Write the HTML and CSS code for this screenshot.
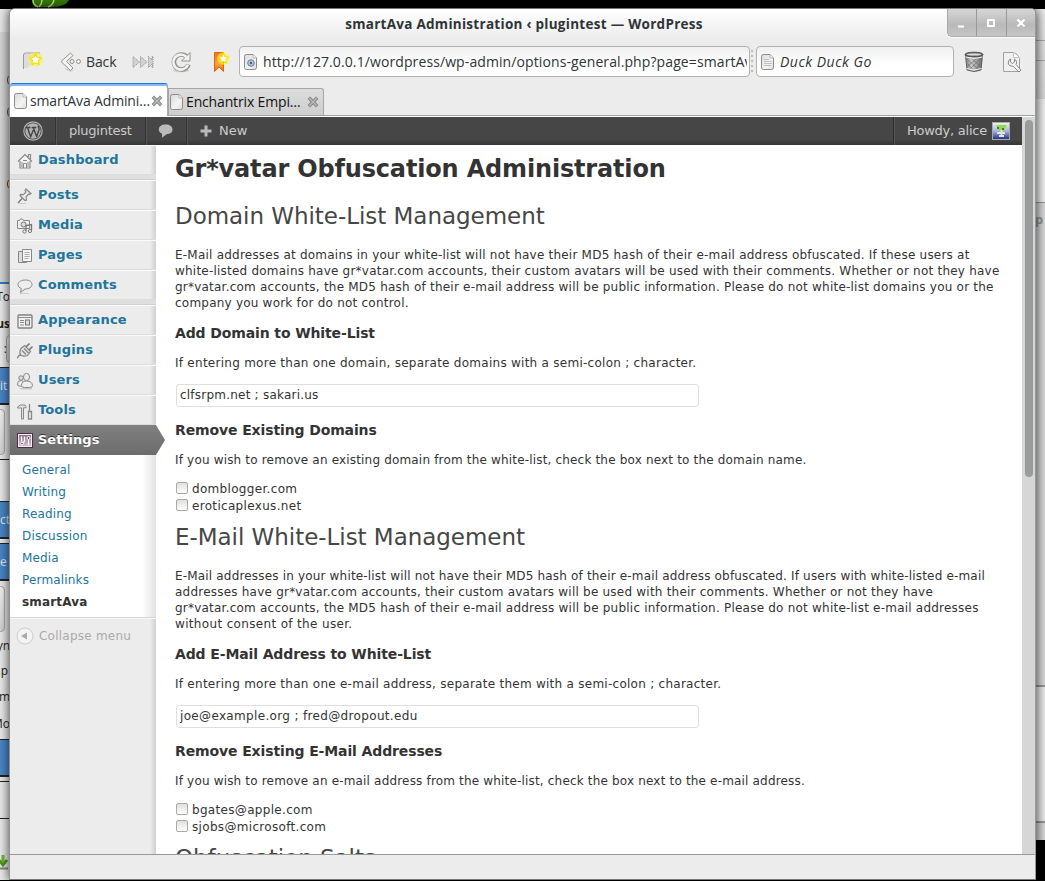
FILE: index.html
```
<!DOCTYPE html>
<html lang="en">
<head>
<meta charset="utf-8">
<title>smartAva Administration</title>
<link rel="stylesheet" href="styles.css">
</head>
<body>
<svg width="0" height="0" class="defs">
  <defs>
    <linearGradient id="paper" x1="0" y1="0" x2="1" y2="1"><stop offset="0" stop-color="#d9dbd7"/><stop offset=".6" stop-color="#f4f4f3"/><stop offset="1" stop-color="#dcdcda"/></linearGradient>
    <linearGradient id="orange" x1="0" y1="0" x2="0" y2="1"><stop offset="0" stop-color="#e87a12"/><stop offset=".6" stop-color="#fda33a"/><stop offset="1" stop-color="#e36c0a"/></linearGradient>
    <linearGradient id="can" x1="0" y1="0" x2="1" y2="0"><stop offset="0" stop-color="#777"/><stop offset=".35" stop-color="#ccc"/><stop offset=".7" stop-color="#999"/><stop offset="1" stop-color="#666"/></linearGradient>
    <linearGradient id="plum" x1="0" y1="0" x2="0" y2="1"><stop offset="0" stop-color="#8a6286"/><stop offset="1" stop-color="#dccbdb"/></linearGradient>
    <linearGradient id="ava" x1="0" y1="0" x2="0" y2="1"><stop offset="0" stop-color="#f2f4ff"/><stop offset=".5" stop-color="#aab2dd"/><stop offset="1" stop-color="#1c2a86"/></linearGradient>
    <symbol id="doc" viewBox="0 0 14 16"><path d="M2.500.5H9L12.500 4V13.500a2 2 0 0 1-2 2h-8a2 2 0 0 1-2-2v-11a2 2 0 0 1 2-2z" fill="url(#paper)" stroke="#8a8c88"/><path d="M9 .8V4h3.300" fill="#fff" stroke="#a5a6a3" stroke-width=".8"/></symbol>
    <symbol id="close" viewBox="0 0 12 12"><path d="M1.800 1.800l8.400 8.400M10.200 1.800l-8.400 8.400" stroke="#868686" stroke-width="3.400"/><path d="M2.300 2.300l7.400 7.400M9.700 2.300l-7.400 7.400" stroke="#bababa" stroke-width="1.400"/></symbol>
    <symbol id="star" viewBox="0 0 14 14"><circle cx="7" cy="7" r="6.800" fill="#fff04a" opacity=".6"/><path d="M7 1.800l1.700 3 3.500.7-2.400 2.700.4 3.500L7 10.200l-3.200 1.500.4-3.500-2.400-2.700 3.500-.7z" fill="#fff" stroke="#f2e200" stroke-width="1.200"/></symbol>
  </defs>
</svg>

<div class="desktop">
  <svg class="leaf" width="40" height="8" viewBox="0 0 40 8"><path d="M0 0H37Q34 7 20 7H3Q0 4 0 0z" fill="#347c08"/><path d="M1 0q0 5 5 7M10 0q0 4-3 7M22 0q-1 5-6 7" stroke="#bce97a" fill="none" stroke-width="1.400"/></svg>
  <div class="behind-left">
    <i class="bl-head"></i>
    <i class="bl-dot bl-gray"></i><i class="bl-dot bl-blue"></i><i class="bl-dot bl-red"></i>
    <i class="bl-field"></i>
    <span class="bl-text t1">To</span>
    <span class="bl-text t2"><b>us</b></span>
    <span class="bl-text t3">:&nbsp;</span>
    <i class="bl-button k0"></i>
    <span class="bl-tile b1">it</span>
    <i class="bl-button k1"></i>
    <i class="bl-rule r1"></i>
    <span class="bl-tile b2">ct</span>
    <span class="bl-tile b3">e</span>
    <i class="bl-button k2"></i>
    <span class="bl-text t4">yn</span>
    <span class="bl-text t5">.p</span>
    <span class="bl-text t6">m</span>
    <span class="bl-text t7">Mo</span>
    <span class="bl-tile b4"></span>
    <i class="bl-rule r2"></i><i class="bl-rule r3"></i>
    <svg class="bl-arrow" width="10" height="16" viewBox="0 0 10 16"><path d="M0 14.500h8" stroke="#888" stroke-width="2"/><path d="M3 1v9M-1 6l4 5 4-5" fill="none" stroke="#4a9a12" stroke-width="2.800"/><path d="M3 1v8" stroke="#8fe04a"/></svg>
  </div>
  <div class="behind-right">
    <i class="br-one"></i><i class="br-two"></i><i class="br-three"></i><span class="br-text">p</span><i class="br-four"></i><i class="br-five"></i>
  </div>

  <div class="window">
    <header class="titlebar">
      <div class="title">smartAva Administration ‹ plugintest — WordPress</div>
      <div class="controls">
        <span><svg width="10" height="10"><path d="M1 8.500h6" stroke="#fff" stroke-width="2"/></svg></span>
        <span><svg width="10" height="10"><rect x="2" y="2" width="6" height="6" fill="none" stroke="#fff" stroke-width="2"/></svg></span>
        <span><svg width="10" height="10"><path d="M1.500 1.500l7 7M8.500 1.500l-7 7" stroke="#fff" stroke-width="2.200"/></svg></span>
      </div>
    </header>

    <div class="toolbar">
      <svg class="i-newtab" width="24" height="24" viewBox="0 0 24 24"><path d="M2 4h11v8l-8 6H2z" fill="#dcddd9"/><path d="M1.500 19V5a2 2 0 0 1 2-2H18" fill="none" stroke="#9b9b9b"/><use href="#star" x="6" y="2" width="15" height="15"/></svg>
      <svg class="i-back" width="22" height="20" viewBox="0 0 22 20"><path d="M10.500 1L1 9.500l9.500 9 2.500-2.500L6.500 9.500 13 3.500z" fill="#f4f4f3" stroke="#90928e"/><path d="M5 16.500l6 3 2-2" fill="none" stroke="#c2c2c0"/><circle cx="12" cy="9.500" r="2" fill="#eee" stroke="#90928e"/><circle cx="18.500" cy="9.500" r="2" fill="#eee" stroke="#90928e"/></svg>
      <span class="back-label">Back</span>
      <svg class="i-fast" width="22" height="14" viewBox="0 0 22 14"><path d="M1 1.500L7.500 7 1 12.500zM8.500 1.500L15 7l-6.500 5.500zM16.500 1.500L20 5V1.500h1v11h-1V9l-3.500 3.500z" fill="#d2d2d2" stroke="#888" stroke-dasharray="1 1"/></svg>
      <svg class="i-reload" width="22" height="22" viewBox="0 0 22 22"><ellipse cx="11" cy="19.500" rx="8" ry="1.700" fill="#cfcfcd"/><path d="M18.500 13.500a7.500 7.500 0 1 1-1.500-7.500" fill="none" stroke="#91918f" stroke-width="4.600"/><path d="M20 1.500v8.500h-8.500z" fill="#f3f3f2" stroke="#91918f"/><path d="M17.900 13.700a7.500 7.500 0 1 1-1.500-7.700" fill="none" stroke="#f3f3f2" stroke-width="2.600"/></svg>
      <svg class="i-book" width="18" height="24" viewBox="0 0 18 24"><path d="M1.500 2.500h9v19L6 17l-4.500 4.500z" fill="url(#orange)" stroke="#dd6508"/><use href="#star" x="4" y="2" width="13" height="13"/></svg>
      <div class="entry address">
        <svg width="14" height="16" viewBox="0 0 14 16"><use href="#doc"/><circle cx="7" cy="9" r="3.300" fill="#b8c8dc" stroke="#667b9c"/><circle cx="7" cy="9" r="1.200" fill="#415e8d"/></svg>
        <span>http://127.0.0.1/wordpress/wp-admin/options-general.php?page=smartAva</span>
      </div>
      <i class="grip"></i>
      <div class="entry search">
        <svg width="14" height="16" viewBox="0 0 14 16"><use href="#doc"/><path d="M3 5.500h5M3 7.500h8M3 9.500h8M3 11.500h7" stroke="#b4b4b2" stroke-width=".8"/></svg>
        <span>Duck Duck Go</span>
      </div>
      <svg class="i-trash" width="22" height="22" viewBox="0 0 22 22"><path d="M2.500 4L4 19q7 3 14 0l1.500-15z" fill="url(#can)" stroke="#5d5d5d"/><path d="M4 8l12 11M8 7l9 8M5 13l5 6M17 8L6 19M14 7l-9 8M17 13l-5 6" stroke="#666" stroke-width=".6"/><ellipse cx="11" cy="3.500" rx="9" ry="2.300" fill="#777" stroke="#4a4a4a"/><ellipse cx="11" cy="3.500" rx="7" ry="1.100" fill="#ddd"/><path d="M2.500 6q8.500 3 17 0M3.500 17.500q7.500 3 15 0" fill="none" stroke="#f2f2f2"/></svg>
      <svg class="i-wrench" width="22" height="22" viewBox="0 0 22 22"><path d="M2.500 1.500h10q4 1 6 6v13h-16z" fill="#f0f0f0" stroke="#a0a09e"/><path d="M12.500 1.500v5h5" fill="#fff" stroke="#c4c4c4"/><path d="M8.500 14.500a4 4 0 0 1 1-6.500v3l2 1.500 2-1.500V8a4 4 0 0 1 1.500 5.500l5 5.500-2 2-5.500-5.500z" fill="#f4f4f4" stroke="#888"/></svg>
    </div>

    <nav class="tabs">
      <div class="tab active"><svg width="14" height="16"><use href="#doc"/></svg><span>smartAva Admini…</span><svg width="12" height="12"><use href="#close"/></svg></div>
      <div class="tab"><svg width="14" height="16"><use href="#doc"/></svg><span>Enchantrix Empi…</span><svg width="12" height="12"><use href="#close"/></svg></div>
    </nav>

    <div class="viewport">
      <div class="page">
        <div class="adminbar">
          <span class="ab-cell ab-logo"><svg width="20" height="20" viewBox="0 0 20 20"><circle cx="10" cy="10" r="9.200" fill="none" stroke="#b2b2b2" stroke-width="1.200"/><circle cx="10" cy="10" r="7.700" fill="#b2b2b2"/><path d="M3 6.500h4.500M4.500 6.500l3.300 10M8.700 6.500h4.600M10.300 6.500l3.500 9.500M7.600 16L10.300 9M13.700 15.500l2.500-7q0-2-1.400-3.500" fill="none" stroke="#444" stroke-width="1.400"/></svg></span>
          <span class="ab-cell ab-site">plugintest</span>
          <span class="ab-cell ab-comment"><svg width="16" height="14" viewBox="0 0 16 14"><path d="M7.500.5C12 .5 14.500 2.500 14.500 5.500S12 10 8.500 10.200L4 13.800V9.800C2 9 .8 7.500.8 5.500.8 2.500 3.500.5 7.500.5z" fill="#bbb"/></svg></span>
          <span class="ab-cell ab-new"><svg width="12" height="12"><path d="M6 .5v11M.5 6h11" stroke="#bbb" stroke-width="3"/></svg>New</span>
          <span class="ab-cell ab-user">Howdy, alice<svg width="18" height="18" viewBox="0 0 18 18"><rect x=".5" y=".5" width="17" height="17" fill="url(#ava)" stroke="#aaa"/><path d="M4 3h11l-3 6H7z" fill="#8edb4c"/><path d="M5 6h2M10 7h2" stroke="#444" stroke-width="1.300"/><path d="M9.500 8v6M5 11h8M7 14h5" stroke="#dfe8d6" stroke-width="1.800"/></svg></span>
        </div>

        <div class="columns">
          <aside class="menu">
            <a class="item"><svg width="18" height="18" viewBox="0 0 18 18"><path d="M2 9.500L9 2.500l7 7M4 9v7h10V9M12.500 5V2.500h2V7" fill="#f4f4f4" stroke="#888" stroke-width="1.200"/><path d="M7.500 16v-4.500h3V16M7 8.500h4M6 10v5M12 10v5" fill="none" stroke="#888"/></svg>Dashboard</a>
            <i class="sep"></i>
            <a class="item"><svg width="18" height="18" viewBox="0 0 18 18"><path d="M10 2l5 4.500-1.500 1-1-.5-2.500 3 .5 3-1.500.5L4 8.500l.5-1.200 3 .4L10 5l-1-1.500z" fill="#eee" stroke="#888" stroke-width="1.200"/><path d="M6 11.500L2 16" stroke="#777" stroke-width="1.300"/><path d="M3 16.500h7" stroke="#ccc"/></svg>Posts</a>
            <a class="item"><svg width="18" height="18" viewBox="0 0 18 18"><path d="M1.500 3.500h2l1-1.500h2l1 1.500h6v8h-12z" fill="#eee" stroke="#888"/><circle cx="7.500" cy="7.500" r="2.500" fill="#ddd" stroke="#777"/><path d="M10 14V8.500l5.500-1V13" fill="none" stroke="#777" stroke-width="1.300"/><circle cx="8.500" cy="14.500" r="1.600" fill="#eee" stroke="#777"/><circle cx="14" cy="14" r="1.600" fill="#eee" stroke="#777"/></svg>Media</a>
            <a class="item"><svg width="18" height="18" viewBox="0 0 18 18"><path d="M2.500 4.500h8v11h-8z" fill="#ddd" stroke="#888"/><path d="M6.500 2.500h9v12h-9z" fill="#f5f5f5" stroke="#888"/><path d="M8.500 5.500h5M8.500 7.500h5M8.500 9.500h5M8.500 11.500h4" stroke="#aaa"/></svg>Pages</a>
            <a class="item"><svg width="18" height="18" viewBox="0 0 18 18"><path d="M9.500 3c4 0 6.500 1.800 6.500 4.500S13 12 9 12l-4.500 3.500.8-4C3.300 10.800 2 9.500 2 7.500 2 4.800 5.500 3 9.500 3z" fill="#eee" stroke="#888"/><path d="M4 16.500h9" stroke="#ccc"/></svg>Comments</a>
            <i class="sep"></i>
            <a class="item"><svg width="18" height="18" viewBox="0 0 18 18"><rect x="2" y="3" width="14" height="13" rx="1" fill="#f2f2f2" stroke="#808080" stroke-width="1.300"/><path d="M2 5.500h14M4 8.500h4M4 10.500h4M4 13h4" stroke="#888"/><rect x="9.500" y="8" width="4" height="5" fill="#ddd" stroke="#777"/></svg>Appearance</a>
            <a class="item"><svg width="18" height="18" viewBox="0 0 18 18"><path d="M8.500 3.500l6 6-3 4q-4 1.500-7-.5-1.500-3 .5-6.500z" fill="#e4e4e4" stroke="#888" stroke-width="1.200"/><path d="M10 5l3.500-3.500M13 8l3.500-3.500" stroke="#777" stroke-width="1.700"/><path d="M5 13q-3 0-3.500 3.500M8 6.500l4.500 4.500M6 8.500l4 4" fill="none" stroke="#888" stroke-width="1.300"/></svg>Plugins</a>
            <a class="item"><svg width="18" height="18" viewBox="0 0 18 18"><circle cx="5" cy="6" r="2.200" fill="#ddd" stroke="#888"/><path d="M1.500 12q0-3.500 3.500-3.500 2 0 3 2v3.500H3q-1.500 0-1.500-2z" fill="#eee" stroke="#888"/><ellipse cx="10.500" cy="5" rx="3" ry="3.700" fill="#ececec" stroke="#888"/><path d="M5.500 13.500q0-4.500 5-4.500 5.500 0 6 4.500 0 2-3 2h-5q-3 0-3-2z" fill="#eee" stroke="#888"/><path d="M4 16.800h12" stroke="#bbb"/></svg>Users</a>
            <a class="item"><svg width="18" height="18" viewBox="0 0 18 18"><path d="M1.500 6q1-3 3-3H9l1 1.500v1.300H7.500V17h-2V6z" fill="#e2e2e2" stroke="#888"/><path d="M13.500 2v7M12.500 9.500h3V17h-3z" fill="#eee" stroke="#888" stroke-width="1.300"/></svg>Tools</a>
            <a class="item current"><svg width="18" height="18" viewBox="0 0 18 18"><rect x="1.500" y="1.500" width="15" height="14" fill="url(#plum)" stroke="#4c2d49"/><rect x="2.500" y="2.500" width="13" height="12" fill="none" stroke="#f3eaf2"/><path d="M5.500 4.500v5M8.500 4.500V9L7 11M12.500 8v5" fill="none" stroke="#fff" stroke-width="1.200"/><circle cx="6" cy="11.500" r="1.300" fill="#6b4267" stroke="#fff"/><circle cx="12.500" cy="6" r="1.500" fill="#6b4267" stroke="#fff"/></svg>Settings</a>
            <div class="submenu">
              <a>General</a><a>Writing</a><a>Reading</a><a>Discussion</a><a>Media</a><a>Permalinks</a><a class="here">smartAva</a>
            </div>
            <div class="collapse"><svg width="18" height="18" viewBox="0 0 18 18"><circle cx="9" cy="9" r="8" fill="#f3f3f3" stroke="#ccc"/><path d="M11 5.500v7L5 9z" fill="#aaa"/></svg>Collapse menu</div>
          </aside>

          <main class="content">
            <h1>Gr*vatar Obfuscation Administration</h1>
            <section>
              <h2>Domain White-List Management</h2>
              <p>E-Mail addresses at domains in your white-list will not have their MD5 hash of their e-mail address obfuscated. If these users at<br>white-listed domains have gr*vatar.com accounts, their custom avatars will be used with their comments. Whether or not they have<br>gr*vatar.com accounts, the MD5 hash of their e-mail address will be public information. Please do not white-list domains you or the<br>company you work for do not control.</p>
              <h3>Add Domain to White-List</h3>
              <p class="loose">If entering more than one domain, separate domains with a semi-colon ; character.</p>
              <div class="field">clfsrpm.net ; sakari.us</div>
              <h3>Remove Existing Domains</h3>
              <p class="tight">If you wish to remove an existing domain from the white-list, check the box next to the domain name.</p>
              <div class="checks"><label><i></i>domblogger.com</label><label><i></i>eroticaplexus.net</label></div>
            </section>
            <section>
              <h2>E-Mail White-List Management</h2>
              <p><span class="tight">E-Mail addresses in your white-list will not have their MD5 hash of their e-mail address obfuscated. If users with white-listed e-mail</span><br>addresses have gr*vatar.com accounts, their custom avatars will be used with their comments. Whether or not they have<br>gr*vatar.com accounts, the MD5 hash of their e-mail address will be public information. Please do not white-list e-mail addresses<br><span class="wide">without consent of the user.</span></p>
              <h3>Add E-Mail Address to White-List</h3>
              <p class="loose">If entering more than one e-mail address, separate them with a semi-colon ; character.</p>
              <div class="field wide">joe@example.org ; fred@dropout.edu</div>
              <h3>Remove Existing E-Mail Addresses</h3>
              <p class="tight">If you wish to remove an e-mail address from the white-list, check the box next to the e-mail address.</p>
              <div class="checks"><label><i></i>bgates@apple.com</label><label><i></i>sjobs@microsoft.com</label></div>
            </section>
            <section><h2>Obfuscation Salts</h2></section>
          </main>
        </div>
      </div>
      <div class="scrollbar"><i></i></div>
    </div>
    <footer class="statusbar"></footer>
  </div>
</div>
</body>
</html>
```
FILE: styles.css
```
* { box-sizing: border-box; }
body { margin: 0; width: 1045px; height: 881px; overflow: hidden; background: #000; font-family: "DejaVu Sans", sans-serif; }
svg { display: block; flex: none; }
.defs { position: absolute; }
.desktop { position: relative; width: 1045px; height: 881px; overflow: hidden; background: #000; }
.leaf { position: absolute; left: 32px; top: 0; }

/* windows underneath */
.behind-left { position: absolute; left: 0; top: 9px; width: 30px; height: 871px; background: #e9e9e9; }
.behind-left > * { position: absolute; display: block; }
.bl-head { left: 0; top: 23px; width: 12px; height: 260px; background: #d7d9d8; }
.bl-dot { left: 7px; width: 8px; height: 10px; border-radius: 5px; border: 1px solid #555; }
.bl-gray { top: 66px; } .bl-blue { top: 98px; border-color: #557; background: #a8b8d0; } .bl-red { top: 170px; border-color: #a22; }
.bl-field { left: 0; top: 273px; width: 12px; height: 598px; background: #ececec; border-top: 2px solid #2f7dd1; }
.bl-text { width: 20px; left: -10px; text-align: right; font: 12px/14px "Open Sans", sans-serif; color: #222; white-space: nowrap; }
.t1 { top: 281px; } .t2 { top: 308px; } .t3 { top: 333px; } .t4 { top: 630px; } .t5 { top: 655px; left: -12px; } .t6 { top: 681px; } .t7 { top: 708px; }
.bl-tile { left: 0; width: 12px; height: 38px; background: #4b87c9; border: solid #20262c; border-width: 1px 0 2px; color: #e7eef6; font: 12px/36px "Open Sans", sans-serif; }
.b1 { top: 358px; } .b2 { top: 492px; } .b3 { top: 534px; } .b4 { top: 730px; }
.bl-button { left: -20px; width: 25px; height: 46px; border: 1px solid #aaa; border-radius: 4px; background: linear-gradient(#f4f4f4, #d5d5d5); }
.k0 { top: 326px; left: 6px; height: 28px; } .k1 { top: 400px; } .k2 { top: 577px; }
.bl-rule { left: 0; width: 12px; height: 1px; background: #222; }
.r1 { top: 450px; } .r2 { top: 772px; } .r3 { top: 809px; }
.bl-arrow { left: 0; top: 845px; }
.behind-right { position: absolute; left: 1025px; top: 9px; width: 20px; height: 862px; background: #dedede; }
.behind-right > * { position: absolute; display: block; left: 0; width: 20px; }
.br-one { top: 0; height: 90px; background: linear-gradient(#eee, #dcdcdc); }
.br-one::after { content: ""; display: block; height: 19px; border: solid #aaa; border-width: 1px 0; margin-top: 31px; }
.br-two { top: 90px; height: 103px; background: #f6f6f6; }
.br-three { top: 193px; height: 484px; border-top: 1px solid #999; }
.br-text { top: 201px; left: 10px !important; font: bold 13px/18px "Open Sans", sans-serif; color: #999; }
.br-four { top: 676px; height: 137px; background: #f0f0f0; border-top: 2px solid #999; }
.br-five { top: 812px; height: 19px; background: #ddd; border-top: 2px solid #999; box-shadow: 0 31px #000, 0 19px #000; }

/* window frame */
.window { position: absolute; left: 10px; top: 9px; width: 1026px; height: 871px; display: flex; flex-direction: column; background: #ececec; border-right: 1px solid #999; border-bottom: 1px solid #777; border-radius: 5px 5px 0 0; overflow: hidden; box-shadow: -1px 0 0 #909090, 0 -1px 0 #777, 0 0 12px 1px rgba(0,0,0,.75); }
.titlebar { position: relative; height: 30px; flex: none; background: linear-gradient(#fff, #ececec); }
.title { padding-left: 3px; text-align: center; font: bold 13.500px/30px "Open Sans", "Noto Sans", sans-serif; letter-spacing: .28px; color: #2e3436; white-space: nowrap; }
.controls { position: absolute; right: 0; top: 0; width: 88px; height: 28px; display: flex; border: solid #aaa; border-width: 0 0 1px 1px; border-radius: 0 0 0 5px; background: linear-gradient(#d6d6d6, #b9b9b9 60%, #c6c6c6); box-shadow: 0 1px #fff; }
.controls span { flex: 1; display: flex; align-items: center; justify-content: center; border-left: 1px solid #999; }
.controls span:first-child { border-left: 0; }

.toolbar { height: 45px; flex: none; display: flex; align-items: center; color: #2e3436; font: 14px/20px "Open Sans", "Noto Sans", sans-serif; }
.i-newtab { margin-left: 12px; } .i-back { margin-left: 14px; }
.back-label { width: 31px; margin-left: 4px; letter-spacing: -.1px; }
.i-fast { margin-left: 15px; } .i-reload { margin-left: 16px; } .i-book { margin-left: 21px; }
.entry { height: 31px; display: flex; align-items: center; gap: 5px; padding: 0 2px 0 4px; border: 1px solid #b0b3ad; border-radius: 4px; background: linear-gradient(#f0f0f0, #fff 60%); overflow: hidden; white-space: nowrap; }
.address { width: 511px; margin-left: 8px; }
.address span { overflow: hidden; flex: 1; letter-spacing: .1px; }
.grip { width: 2px; height: 24px; margin: 0 3px 0 1px; background: repeating-linear-gradient(#bbb 0 2px, transparent 2px 5px); }
.search { width: 198px; font-style: italic; letter-spacing: .5px; }
.i-trash { margin-left: 9px; } .i-wrench { margin-left: 16px; }

.tabs { height: 32px; flex: none; display: flex; align-items: flex-end; border-bottom: 1px solid #a2a2a2; font: 14px/20px "Open Sans", "Noto Sans", sans-serif; letter-spacing: -.15px; color: #111; white-space: nowrap; }
.tab { width: 156px; height: 27px; display: flex; align-items: center; padding: 0 4px 0 1px; border: 1px solid #a5a5a5; border-bottom: 0; border-radius: 0 3px 0 0; background: linear-gradient(#dcdcdc, #cecece); }
.tab span { flex: 1; margin-left: 2px; }
.tab.active { width: 158px; height: 33px; margin-bottom: -1px; background: #fff; border: solid #1f74d4; border-width: 1px 1px 0 0; border-right-color: #aaa; border-radius: 3px 3px 0 0; box-shadow: inset 0 2px #86b9f2; padding: 1px 4px 0; color: #2e3436; }

/* web page */
.viewport { display: flex; height: 738px; flex: none; padding-top: 1px; background: #fff; }
.page { width: 1012px; height: 737px; overflow: hidden; }
.scrollbar { width: 13px; padding: 3px 3px 0; background: #d6d6d6; }
.scrollbar i { display: block; width: 8px; height: 357px; border-radius: 4px; background: #999b9c; }
.statusbar { flex: 1; border-top: 1px solid #999; background: #ececec; }

.adminbar { height: 28px; display: flex; font-size: 13px; line-height: 28px; color: #ccc; background: linear-gradient(#464646 80%, #373737); }
.ab-cell { display: flex; align-items: center; border-right: 1px solid #333; box-shadow: 1px 0 #555; }
.ab-logo { width: 46px; padding-left: 13px; }
.ab-site { width: 90px; padding-left: 13px; letter-spacing: -.25px; }
.ab-comment { width: 41px; padding-left: 12px; }
.ab-new { padding-left: 13px; gap: 7px; border: 0; box-shadow: none; }
.ab-user { margin-left: auto; width: 129px; padding-left: 13px; gap: 5px; border-right: 0; border-left: 1px solid #2e2e2e; box-shadow: inset 1px 0 #555; letter-spacing: -.25px; }

.columns { display: flex; height: 709px; }
.menu { width: 146px; flex: none; background: linear-gradient(90deg, #ececec 140px, #d0d0d0); }
.item { height: 30px; display: flex; align-items: center; gap: 4px; padding: 1px 0 1px 6px; border-top: 1px solid #fafafa; border-bottom: 1px solid #dcdcdc; font-size: 13px; font-weight: bold; line-height: 26px; letter-spacing: .15px; color: #21759b; }
.item svg { position: relative; top: 1px; }
.sep { display: block; height: 5px; background: #dfdfdf; border-bottom: 1px solid #cfcfcf; }
.item.current { position: relative; color: #fff; border: 0; letter-spacing: 0; background: linear-gradient(#808080, #6c6c6c); text-shadow: 0 -1px #333; }
.item.current::after { content: ""; position: absolute; left: 146px; top: 0; width: 9px; height: 30px; background: inherit; clip-path: polygon(0 0, 100% 50%, 0 100%); }
.submenu { height: 163px; padding: 4px 0 0 12px; border-bottom: 1px solid #d5d5d5; background: linear-gradient(90deg, #fff 132px, #e2e2e2 146px); background-origin: border-box; font-size: 12px; line-height: 22px; letter-spacing: .17px; color: #21759b; }
.submenu a { display: block; }
.submenu .here { color: #333; font-weight: bold; }
.collapse { height: 34px; display: flex; align-items: center; gap: 5px; padding-left: 6px; border-top: 1px solid #f8f8f8; font-size: 12px; letter-spacing: .23px; color: #aaa; }

.content { flex: 1; padding: 9px 0 0 19px; font-size: 12px; line-height: 16px; letter-spacing: .22px; color: #333; white-space: nowrap; }
.tight { letter-spacing: .175px; }
.loose { letter-spacing: .265px; }
.wide { letter-spacing: .34px; }
h1, h2, h3, p { margin: 0; }
h1 { margin-bottom: 17px; font-size: 24px; line-height: 30px; letter-spacing: -.17px; }
section { height: 321px; }
h2 { margin-bottom: 16px; font-size: 23px; font-weight: normal; line-height: 30px; letter-spacing: -.04px; color: #464646; }
h3 { margin: 12px 0; font-size: 14px; line-height: 20px; letter-spacing: -.12px; }
.field { width: 523px; height: 23px; margin: 13px 0 13px 1px; padding-left: 3px; border: 1px solid #dfdfdf; border-radius: 3px; line-height: 20px; }
.checks { margin-top: 12px; letter-spacing: .32px; }
.checks label { display: flex; align-items: center; height: 17px; }
.checks i { width: 12px; height: 12px; margin: 0 4px 1px 1px; border: 1px solid #a9aca4; border-radius: 2px; background: linear-gradient(#dfdfdb, #fff); }
```
